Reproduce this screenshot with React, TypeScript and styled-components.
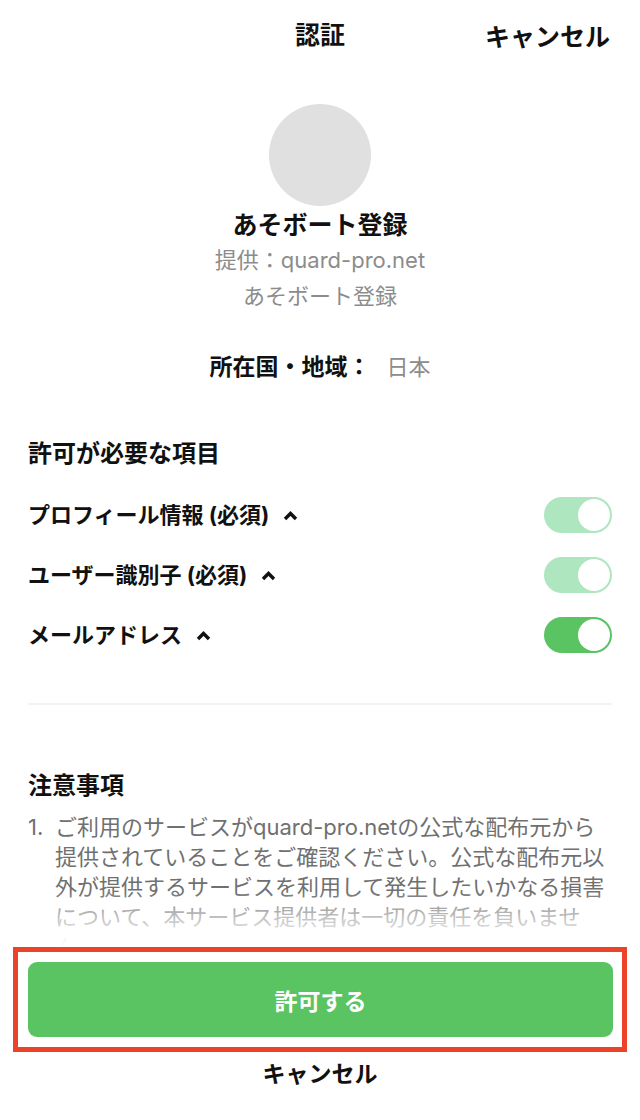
import React from "react";
import styled, { createGlobalStyle } from "styled-components";

const GlobalStyle = createGlobalStyle`
  html, body {
    margin: 0;
    padding: 0;
    background: #ffffff;
  }
  body {
    font-family: "Inter", "Noto Sans CJK JP", sans-serif;
    color: #111111;
  }
  * { box-sizing: border-box; }
`;

const Page = styled.div`
  width: 640px;
  height: 1120px;
  display: flex;
  flex-direction: column;
  overflow: hidden;
  background: #fff;
`;

const Header = styled.header`
  height: 70px;
  flex: none;
  display: grid;
  grid-template-columns: 1fr auto 1fr;
  align-items: center;
  padding: 0 30px;
`;

const HeaderTitle = styled.h1`
  grid-column: 2;
  margin: 0;
  font-size: 25px;
  font-weight: 700;
  line-height: 30px;
`;

const HeaderCancel = styled.button`
  grid-column: 3;
  justify-self: end;
  border: none;
  background: none;
  padding: 0;
  font: inherit;
  font-size: 25px;
  font-weight: 700;
  color: #111;
`;

const Content = styled.main`
  flex: 1;
  min-height: 0;
  overflow: hidden;
  padding: 0 28px;
`;

const Profile = styled.section`
  display: flex;
  flex-direction: column;
  align-items: center;
  padding-top: 34px;
`;

const Avatar = styled.div`
  width: 102px;
  height: 102px;
  border-radius: 50%;
  background: #e0e0e0;
`;

const AppName = styled.div`
  margin-top: 3px;
  font-size: 25px;
  font-weight: 700;
  line-height: 32px;
`;

const Provider = styled.div`
  margin-top: 4px;
  font-size: 22px;
  line-height: 30px;
  color: #8c8c8c;
`;

const SubName = styled.div`
  margin-top: 6px;
  font-size: 22px;
  line-height: 30px;
  color: #8c8c8c;
`;

const RegionRow = styled.div`
  margin-top: 41px;
  display: flex;
  justify-content: center;
  align-items: center;
  gap: 16px;
  line-height: 30px;
`;

const RegionLabel = styled.span`
  font-size: 23px;
  font-weight: 700;
`;

const RegionValue = styled.span`
  font-size: 22px;
  color: #8c8c8c;
`;

const SectionTitle = styled.h2<{ $top: number }>`
  margin: ${(p) => p.$top}px 0 0;
  font-size: 24px;
  font-weight: 700;
  line-height: 32px;
`;

const PermissionList = styled.div`
  margin-top: 15px;
  display: flex;
  flex-direction: column;
`;

const PermissionRow = styled.div`
  height: 60px;
  display: flex;
  align-items: center;
  justify-content: space-between;
`;

const PermissionLabel = styled.div`
  display: flex;
  align-items: center;
  gap: 14px;
  font-size: 22px;
  font-weight: 700;
  line-height: 30px;
`;

const Toggle = styled.div<{ $locked: boolean }>`
  width: 68px;
  height: 36px;
  border-radius: 18px;
  background: ${(p) => (p.$locked ? "#ade6bf" : "#5ac362")};
  display: flex;
  align-items: center;
  justify-content: flex-end;
  padding: 2px;
`;

const Knob = styled.div`
  width: 32px;
  height: 32px;
  border-radius: 50%;
  background: #ffffff;
`;

const Divider = styled.hr`
  margin: 38px 0 0;
  border: none;
  height: 2px;
  background: #f3f3f3;
`;

const NoteList = styled.ol`
  margin: 10px 0 0;
  padding: 0;
  list-style: none;
`;

const NoteItem = styled.li`
  display: flex;
  font-size: 22px;
  line-height: 30px;
  color: #707070;
`;

const NoteNumber = styled.span`
  flex: none;
  width: 27px;
`;

const NoteText = styled.span`
  flex: 1;
  line-break: strict;
`;

const Footer = styled.footer`
  position: relative;
  flex: none;
  display: flex;
  flex-direction: column;
  align-items: center;
  padding: 0 13px 0;
  height: 173px;
  background: #fff;

  &::before {
    content: "";
    position: absolute;
    left: 0;
    right: 0;
    top: -56px;
    height: 56px;
    background: linear-gradient(
      to bottom,
      rgba(255, 255, 255, 0) 0%,
      rgba(255, 255, 255, 0.55) 45%,
      rgba(255, 255, 255, 0.92) 85%,
      #ffffff 100%
    );
    pointer-events: none;
  }
`;

const Highlight = styled.div`
  width: 100%;
  border: 5px solid #ea432a;
  padding: 10px 9px 10px 10px;
`;

const AllowButton = styled.button`
  width: 100%;
  height: 75px;
  border: none;
  border-radius: 9px;
  background: #5bc462;
  color: #ffffff;
  font: inherit;
  font-size: 23px;
  font-weight: 700;
`;

const FooterCancel = styled.button`
  margin-top: 7px;
  border: none;
  background: none;
  padding: 0;
  font: inherit;
  font-size: 23px;
  font-weight: 700;
  line-height: 30px;
  color: #111;
`;

const Chevron = () => (
  <svg width="15" height="11" viewBox="0 0 15 11" aria-hidden="true">
    <path d="M2 9 L7.5 3.5 L13 9" fill="none" stroke="#111" strokeWidth="3.4" strokeLinejoin="miter" />
  </svg>
);

const permissions = [
  { label: "プロフィール情報 (必須)", locked: true },
  { label: "ユーザー識別子 (必須)", locked: true },
  { label: "メールアドレス", locked: false },
];

export default function App() {
  return (
    <>
      <GlobalStyle />
      <Page>
        <Header>
          <HeaderTitle>認証</HeaderTitle>
          <HeaderCancel>キャンセル</HeaderCancel>
        </Header>
        <Content>
          <Profile>
            <Avatar />
            <AppName>あそボート登録</AppName>
            <Provider>提供：quard-pro.net</Provider>
            <SubName>あそボート登録</SubName>
          </Profile>
          <RegionRow>
            <RegionLabel>所在国・地域：</RegionLabel>
            <RegionValue>日本</RegionValue>
          </RegionRow>
          <SectionTitle $top={56}>許可が必要な項目</SectionTitle>
          <PermissionList>
            {permissions.map((p) => (
              <PermissionRow key={p.label}>
                <PermissionLabel>
                  {p.label}
                  <Chevron />
                </PermissionLabel>
                <Toggle $locked={p.locked}>
                  <Knob />
                </Toggle>
              </PermissionRow>
            ))}
          </PermissionList>
          <Divider />
          <SectionTitle $top={65}>注意事項</SectionTitle>
          <NoteList>
            <NoteItem>
              <NoteNumber>1.</NoteNumber>
              <NoteText>
                ご利用のサービスがquard-pro.netの公式な配布元から提供されていることをご確認ください。公式な配布元以外が提供するサービスを利用して発生したいかなる損害について、本サービス提供者は一切の責任を負いません。
              </NoteText>
            </NoteItem>
          </NoteList>
        </Content>
        <Footer>
          <Highlight>
            <AllowButton>許可する</AllowButton>
          </Highlight>
          <FooterCancel>キャンセル</FooterCancel>
        </Footer>
      </Page>
    </>
  );
}
